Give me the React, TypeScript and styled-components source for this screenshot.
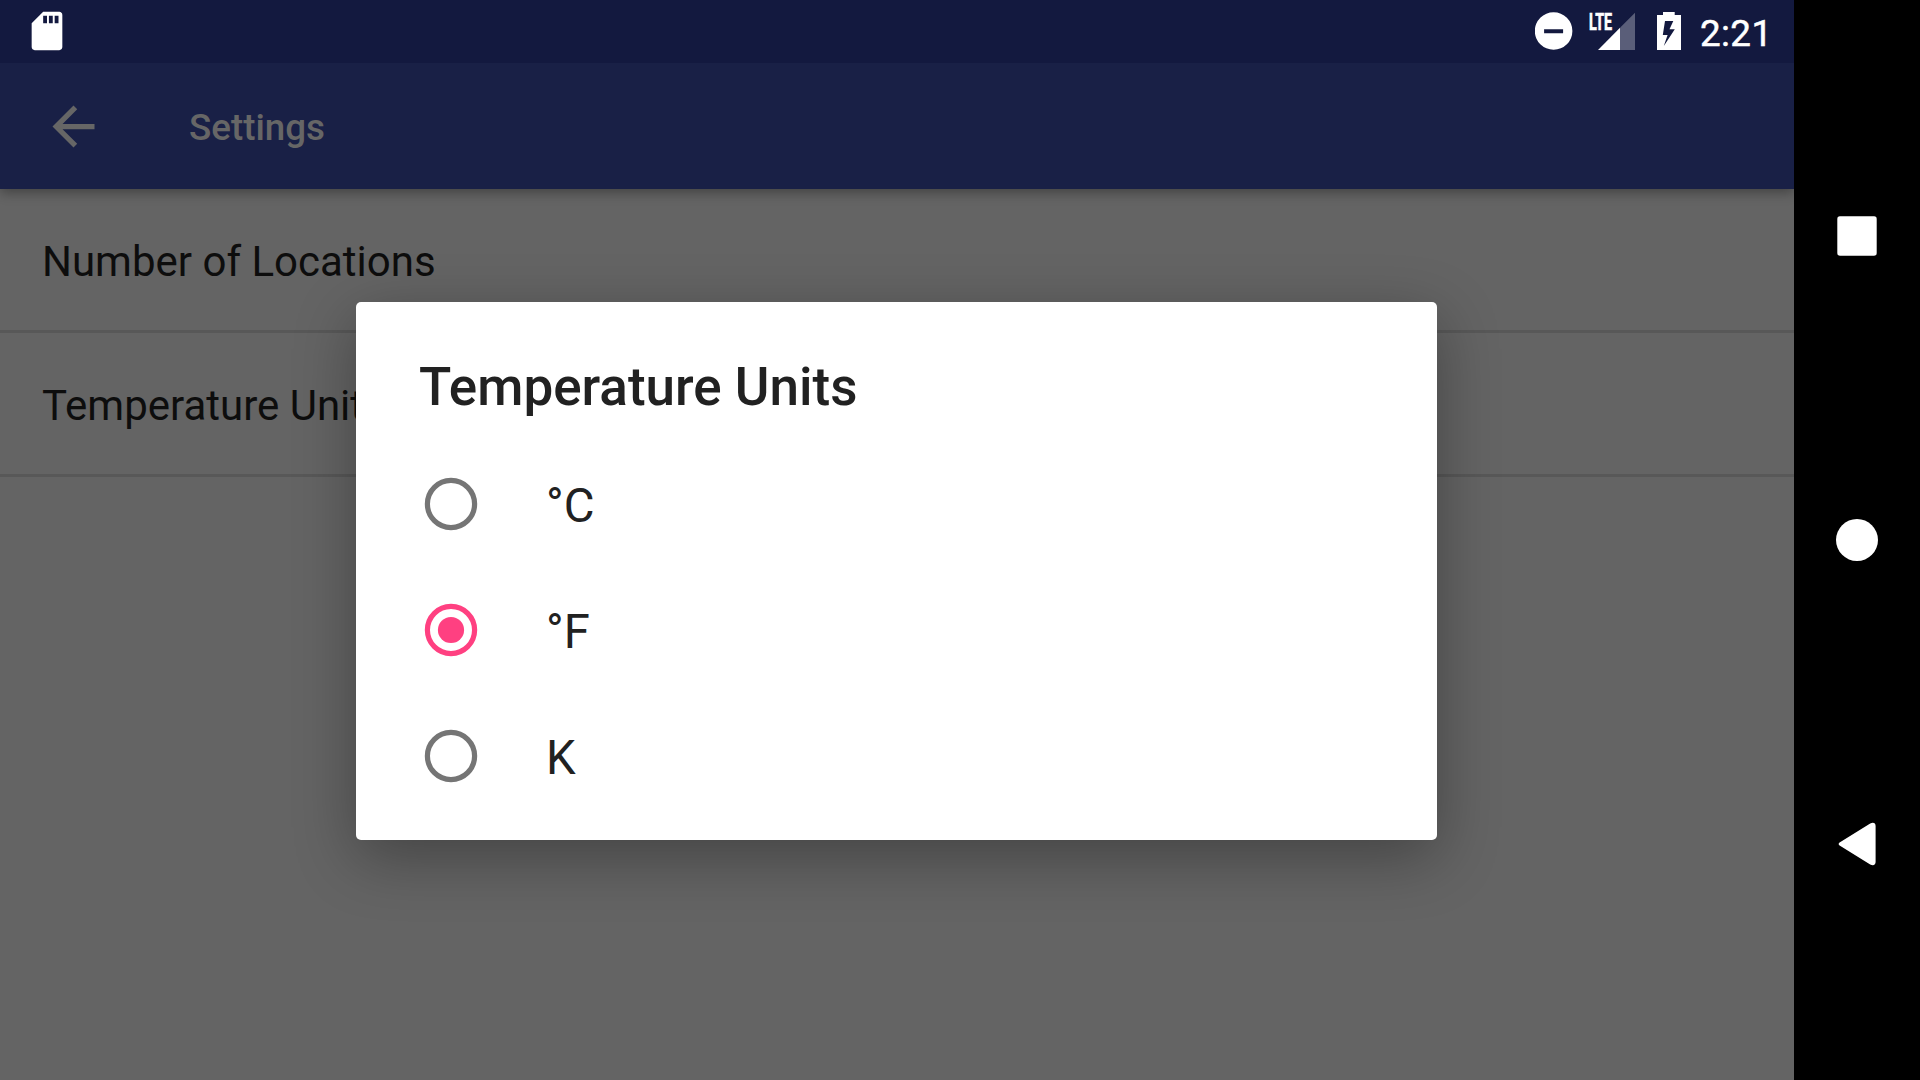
import React, { useState } from "react";
import styled, { createGlobalStyle } from "styled-components";

const GlobalStyle = createGlobalStyle`
  *, *::before, *::after { box-sizing: border-box; }
  body {
    margin: 0;
    background: #000;
    font-family: Roboto, "Noto Sans", sans-serif;
    overflow: hidden;
  }
`;

const Device = styled.div`
  display: flex;
  width: 1920px;
  height: 1080px;
  overflow: hidden;
  background: #000;
`;

const Screen = styled.main`
  position: relative;
  display: flex;
  flex-direction: column;
  width: 1794px;
  height: 1080px;
  overflow: hidden;
  background: #646464;
`;

const StatusBar = styled.div`
  position: relative;
  z-index: 1;
  display: flex;
  align-items: center;
  justify-content: space-between;
  flex: none;
  height: 63px;
  padding: 0 26px 1px 24px;
  background: #13193f;
  color: #fff;
`;

const StatusIcons = styled.div`
  display: flex;
  align-items: center;
`;

const StatusIcon = styled.svg<{ $gap?: number }>`
  display: block;
  flex: none;
  fill: currentColor;
  margin-right: ${(p) => p.$gap ?? 0}px;
`;

const Signal = styled.div`
  display: flex;
  align-items: flex-start;
  width: 46px;
  height: 38px;
  margin-right: 22px;
`;

const NetworkType = styled.span`
  flex: none;
  width: 9px;
  font-size: 23px;
  font-weight: 700;
  line-height: 22px;
  white-space: nowrap;
  -webkit-text-stroke: 0.7px #fff;
  transform: scaleX(0.62);
  transform-origin: 0 50%;
`;

const Clock = styled.time`
  width: 68px;
  padding-top: 5px;
  font-size: 36.75px;
  font-weight: 400;
  -webkit-text-stroke: 0.5px #fff;
  line-height: 44px;
  letter-spacing: 0.4px;
  white-space: nowrap;
`;

const Toolbar = styled.header`
  position: relative;
  display: flex;
  align-items: center;
  flex: none;
  height: 126px;
  padding-left: 42px;
  gap: 84px;
  background: #192046;
  color: #666;
  box-shadow: 0 4px 11px rgba(0, 0, 0, 0.32);
`;

const BackButton = styled.button`
  display: flex;
  padding: 0;
  border: 0;
  background: none;
  color: inherit;
`;

const ToolbarTitle = styled.h1`
  margin: 0;
  padding-top: 4px;
  font-size: 36.75px;
  font-weight: 500;
  line-height: 44px;
`;

const PreferenceList = styled.ul`
  margin: 0;
  padding: 0;
  list-style: none;
`;

const Preference = styled.li`
  display: flex;
  align-items: center;
  height: 144px;
  padding: 5px 42px 0;
  border-bottom: 3px solid #585858;
  color: #0d0d0d;
  font-size: 42px;
  line-height: 50px;
`;

const Dialog = styled.section`
  position: absolute;
  top: 302px;
  left: 356px;
  width: 1081px;
  height: 538px;
  padding: 53px 0 20px;
  border-radius: 5px;
  background: #fff;
  color: #212121;
  box-shadow: 0 17px 62px rgba(0, 0, 0, 0.33);
`;

const DialogTitle = styled.h2`
  height: 86px;
  margin: 0;
  padding-left: 63px;
  font-size: 53px;
  font-weight: 500;
  line-height: 64px;
`;

const Option = styled.label`
  display: flex;
  align-items: center;
  height: 126px;
  padding-left: 63px;
  gap: 64px;
  font-size: 47.25px;
  line-height: 56px;
`;

const RadioMark = styled.svg<{ $checked: boolean }>`
  flex: none;
  color: ${(p) => (p.$checked ? "#ff4081" : "#757575")};
`;

const HiddenInput = styled.input`
  position: absolute;
  opacity: 0;
  pointer-events: none;
`;

const OptionText = styled.span`
  padding-top: 3px;
`;

const NavigationBar = styled.nav`
  display: flex;
  flex-direction: column;
  align-items: center;
  width: 126px;
  padding-top: 173px;
  gap: 178px;
`;

const NavIcon = styled.svg`
  display: block;
  flex: none;
  fill: #fff;
`;

const units = ["°C", "°F", "K"];

function Radio({ checked }: { checked: boolean }) {
  return (
    <RadioMark $checked={checked} width="63" height="64" viewBox="0 0 63 64">
      <circle cx="32" cy="32" r="23.6" fill="none" stroke="currentColor" strokeWidth="5.2" />
      {checked && <circle cx="32" cy="32" r="13.1" fill="currentColor" />}
    </RadioMark>
  );
}

export default function App() {
  const [unit, setUnit] = useState("°F");
  return (
    <Device>
      <GlobalStyle />
      <Screen>
        <StatusBar>
          <StatusIcon width="46" height="46" viewBox="0 0 24 24">
            <path d="M18.4 2H10L4 8v12.4C4 21.3 4.7 22 5.6 22h12.8c.9 0 1.6-.7 1.6-1.6V3.6C20 2.7 19.3 2 18.4 2zM12 8h-2V4h2v4zm3 0h-2V4h2v4zm3 0h-2V4h2v4z" />
          </StatusIcon>
          <StatusIcons>
            <StatusIcon width="38" height="38" viewBox="0 0 38 38" $gap={16}>
              <path fillRule="evenodd" d="M18.6 .2a18.8 18.8 0 1 0 0 37.6 18.8 18.8 0 0 0 0-37.6zM9.1 17.2h19v4h-19z" />
            </StatusIcon>
            <Signal>
              <NetworkType>LTE</NetworkType>
              <StatusIcon width="37" height="38" viewBox="0 0 37 38">
                <path d="M22 15.7 37 .7V38H22z" opacity=".3" />
                <path d="M22 15.7V38H0z" />
              </StatusIcon>
            </Signal>
            <StatusIcon width="24" height="38" viewBox="0 0 24 38" $gap={19}>
              <path fillRule="evenodd" d="M6 0h11.7v3H24v35H0V3h6zM8 9 5.8 23h4.8L6.8 34l11-16.8h-5.3L16.3 9z" />
            </StatusIcon>
            <Clock>2:21</Clock>
          </StatusIcons>
        </StatusBar>
        <Toolbar>
          <BackButton aria-label="Navigate up">
            <svg width="63" height="63" viewBox="0 0 24 24" fill="currentColor">
              <path d="M20 11H7.83l5.59-5.59L12 4l-8 8 8 8 1.41-1.41L7.83 13H20v-2z" />
            </svg>
          </BackButton>
          <ToolbarTitle>Settings</ToolbarTitle>
        </Toolbar>
        <PreferenceList>
          <Preference>Number of Locations</Preference>
          <Preference>Temperature Units</Preference>
        </PreferenceList>
        <Dialog role="dialog" aria-labelledby="units-title">
          <DialogTitle id="units-title">Temperature Units</DialogTitle>
          {units.map((name) => (
            <Option key={name}>
              <HiddenInput type="radio" name="unit" checked={unit === name} onChange={() => setUnit(name)} />
              <Radio checked={unit === name} />
              <OptionText>{name}</OptionText>
            </Option>
          ))}
        </Dialog>
      </Screen>
      <NavigationBar>
        <NavIcon width="126" height="126" viewBox="0 0 126 126">
          <rect x="43.3" y="43.3" width="39.4" height="39.4" rx="2.6" />
        </NavIcon>
        <NavIcon width="126" height="126" viewBox="0 0 126 126">
          <circle cx="63" cy="63" r="21" />
        </NavIcon>
        <NavIcon width="126" height="126" viewBox="0 0 126 126">
          <path d="M46 61.2 76.2 42.6C79.2 40.9 81.6 42 81.6 45V81C81.6 84 79.2 85.1 76.2 83.4L46 64.8C44.2 63.7 44.2 62.3 46 61.2z" />
        </NavIcon>
      </NavigationBar>
    </Device>
  );
}
